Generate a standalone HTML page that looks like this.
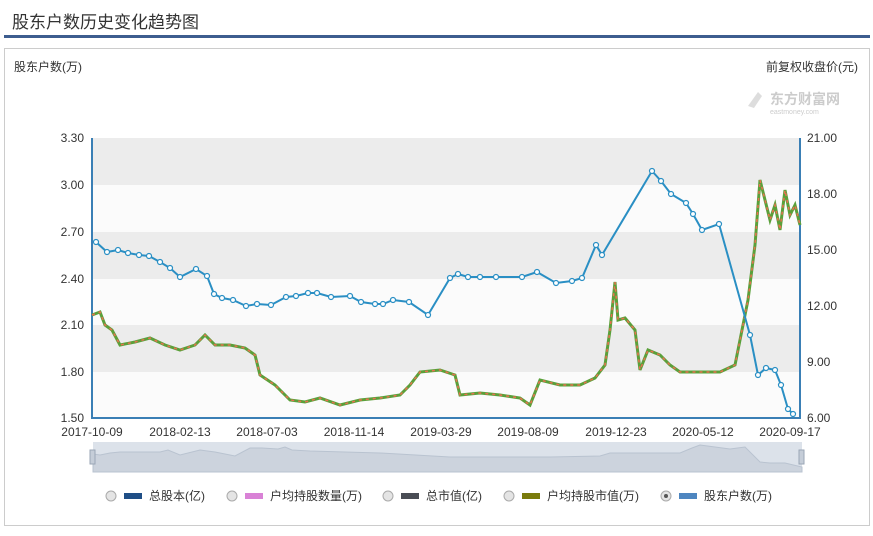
<!DOCTYPE html>
<html><head><meta charset="utf-8"><style>
body{margin:0;width:873px;height:536px;background:#fff;font-family:"Liberation Sans","Noto Sans CJK SC",sans-serif;overflow:hidden;position:relative}
.t{position:absolute;left:12px;top:8px;font-size:17px;color:#333}
.bar{position:absolute;left:4px;top:35px;width:866px;height:3px;background:#3d5d8f}
.box{position:absolute;left:4px;top:48px;width:864px;height:476px;border:1px solid #ccc}
svg{position:absolute;left:0;top:0}
</style></head><body>
<div class="t">股东户数历史变化趋势图</div>
<div class="bar"></div>
<div class="box"></div>
<svg width="873" height="536" font-family="Liberation Sans,Noto Sans CJK SC,sans-serif" font-size="12" fill="#333">
<text x="14" y="71">股东户数(万)</text>
<text x="858" y="71" text-anchor="end">前复权收盘价(元)</text>
<text x="770" y="104" font-size="14" fill="#ccc" font-weight="bold">东方财富网</text>
<text x="770" y="114" font-size="7" fill="#ccc">eastmoney.com</text>
<path d="M748 106 L758 92 L762 96 L754 108 Z" fill="#ddd"/>
<rect x="93" y="138" width="707" height="47" fill="#ececec"/>
<rect x="93" y="232" width="707" height="47" fill="#ececec"/>
<rect x="93" y="325" width="707" height="47" fill="#ececec"/>
<g fill="#fff"><rect x="93" y="185" width="707" height="47" fill="#fbfbfb"/><rect x="93" y="279" width="707" height="46" fill="#fbfbfb"/><rect x="93" y="372" width="707" height="46" fill="#fbfbfb"/></g>
<line x1="92" y1="138" x2="92" y2="419" stroke="#3a7fb5" stroke-width="2"/>
<line x1="800" y1="138" x2="800" y2="419" stroke="#3a7fb5" stroke-width="2"/>
<line x1="92" y1="418" x2="800" y2="418" stroke="#3a7fb5" stroke-width="2"/>
<g text-anchor="end"><text x="84" y="142">3.30</text><text x="84" y="189">3.00</text><text x="84" y="236">2.70</text><text x="84" y="283">2.40</text><text x="84" y="329">2.10</text><text x="84" y="376">1.80</text><text x="84" y="422">1.50</text></g>
<g><text x="807" y="142">21.00</text><text x="807" y="198">18.00</text><text x="807" y="254">15.00</text><text x="807" y="310">12.00</text><text x="807" y="366">9.00</text><text x="807" y="422">6.00</text></g>
<g text-anchor="middle"><text x="92" y="436">2017-10-09</text><text x="180" y="436">2018-02-13</text><text x="267" y="436">2018-07-03</text><text x="354" y="436">2018-11-14</text><text x="441" y="436">2019-03-29</text><text x="528" y="436">2019-08-09</text><text x="616" y="436">2019-12-23</text><text x="703" y="436">2020-05-12</text><text x="790" y="436">2020-09-17</text></g>
<polyline fill="none" stroke="#5aa03a" stroke-width="3" points="92,315 100,312 105,325 112,330 120,345 135,342 150,338 165,345 180,350 195,345 205,335 215,345 230,345 245,348 255,355 260,375 275,385 290,400 305,402 320,398 340,405 360,400 380,398 400,395 410,385 420,372 440,370 455,375 460,395 480,393 500,395 520,398 530,405 540,380 560,385 580,385 595,378 605,365 610,330 615,282 618,320 625,318 635,330 640,370 648,350 660,355 670,365 680,372 700,372 720,372 735,365 740,340 748,300 755,245 760,180 765,200 770,220 775,205 780,230 785,190 790,215 795,205 800,225"/>
<polyline fill="none" stroke="#e9704f" stroke-width="1.5" stroke-dasharray="3 4" points="92,315 100,312 105,325 112,330 120,345 135,342 150,338 165,345 180,350 195,345 205,335 215,345 230,345 245,348 255,355 260,375 275,385 290,400 305,402 320,398 340,405 360,400 380,398 400,395 410,385 420,372 440,370 455,375 460,395 480,393 500,395 520,398 530,405 540,380 560,385 580,385 595,378 605,365 610,330 615,282 618,320 625,318 635,330 640,370 648,350 660,355 670,365 680,372 700,372 720,372 735,365 740,340 748,300 755,245 760,180 765,200 770,220 775,205 780,230 785,190 790,215 795,205 800,225"/>
<polyline id="b" fill="none" stroke="#2a8fc4" stroke-width="2" points="96,242 107,252 118,250 128,253 139,255 149,256 160,262 170,268 180,277 196,269 207,276 214,294 222,298 233,300 246,306 257,304 271,305 286,297 296,296 308,293 317,293 331,297 350,296 361,302 375,304 383,304 393,300 409,302 428,315 450,278 458,274 468,277 480,277 496,277 522,277 537,272 556,283 572,281 582,278 596,245 602,255 652,171 661,181 671,194 686,203 693,214 702,230 719,224 750,335 758,375 766,368 775,370 781,385 788,409 793,414"/>
<g fill="#fff" stroke="#2a8fc4" stroke-width="1.2">
<circle cx="96" cy="242" r="2.5"/><circle cx="107" cy="252" r="2.5"/><circle cx="118" cy="250" r="2.5"/><circle cx="128" cy="253" r="2.5"/><circle cx="139" cy="255" r="2.5"/><circle cx="149" cy="256" r="2.5"/><circle cx="160" cy="262" r="2.5"/><circle cx="170" cy="268" r="2.5"/><circle cx="180" cy="277" r="2.5"/><circle cx="196" cy="269" r="2.5"/><circle cx="207" cy="276" r="2.5"/><circle cx="214" cy="294" r="2.5"/><circle cx="222" cy="298" r="2.5"/><circle cx="233" cy="300" r="2.5"/><circle cx="246" cy="306" r="2.5"/><circle cx="257" cy="304" r="2.5"/><circle cx="271" cy="305" r="2.5"/><circle cx="286" cy="297" r="2.5"/><circle cx="296" cy="296" r="2.5"/><circle cx="308" cy="293" r="2.5"/><circle cx="317" cy="293" r="2.5"/><circle cx="331" cy="297" r="2.5"/><circle cx="350" cy="296" r="2.5"/><circle cx="361" cy="302" r="2.5"/><circle cx="375" cy="304" r="2.5"/><circle cx="383" cy="304" r="2.5"/><circle cx="393" cy="300" r="2.5"/><circle cx="409" cy="302" r="2.5"/><circle cx="428" cy="315" r="2.5"/><circle cx="450" cy="278" r="2.5"/><circle cx="458" cy="274" r="2.5"/><circle cx="468" cy="277" r="2.5"/><circle cx="480" cy="277" r="2.5"/><circle cx="496" cy="277" r="2.5"/><circle cx="522" cy="277" r="2.5"/><circle cx="537" cy="272" r="2.5"/><circle cx="556" cy="283" r="2.5"/><circle cx="572" cy="281" r="2.5"/><circle cx="582" cy="278" r="2.5"/><circle cx="596" cy="245" r="2.5"/><circle cx="602" cy="255" r="2.5"/><circle cx="652" cy="171" r="2.5"/><circle cx="661" cy="181" r="2.5"/><circle cx="671" cy="194" r="2.5"/><circle cx="686" cy="203" r="2.5"/><circle cx="693" cy="214" r="2.5"/><circle cx="702" cy="230" r="2.5"/><circle cx="719" cy="224" r="2.5"/><circle cx="750" cy="335" r="2.5"/><circle cx="758" cy="375" r="2.5"/><circle cx="766" cy="368" r="2.5"/><circle cx="775" cy="370" r="2.5"/><circle cx="781" cy="385" r="2.5"/><circle cx="788" cy="409" r="2.5"/><circle cx="793" cy="414" r="2.5"/></g>
<rect x="93" y="442" width="709" height="30" fill="#dce2ea"/>
<path d="M93,454 L100,455 L110,453 L120,452 L160,452 L168,450 L180,455 L200,450 L215,452 L235,456 L250,448 L262,448 L278,449 L285,447 L292,450 L310,451 L380,453 L450,457 L550,457 L600,456 L610,453 L680,453 L692,448 L700,445 L730,449 L745,447 L760,462 L770,463 L785,463 L802,467 L802,472 L93,472 Z" fill="#ccd3dd" stroke="#b9c3d0"/>
<rect x="90" y="450" width="5" height="14" fill="#c5cdd8" stroke="#9aa6b6"/>
<rect x="799" y="450" width="5" height="14" fill="#c5cdd8" stroke="#9aa6b6"/>
<g font-size="12">
<circle cx="111" cy="496" r="5" fill="#e4e4e4" stroke="#aaa"/><rect x="124" y="493" width="18" height="6" fill="#1f4e86"/><text x="149" y="500">总股本(亿)</text>
<circle cx="232" cy="496" r="5" fill="#e4e4e4" stroke="#aaa"/><rect x="245" y="493" width="18" height="6" fill="#d982d6"/><text x="270" y="500">户均持股数量(万)</text>
<circle cx="388" cy="496" r="5" fill="#e4e4e4" stroke="#aaa"/><rect x="401" y="493" width="18" height="6" fill="#4a4d55"/><text x="426" y="500">总市值(亿)</text>
<circle cx="509" cy="496" r="5" fill="#e4e4e4" stroke="#aaa"/><rect x="522" y="493" width="18" height="6" fill="#7a7b0c"/><text x="547" y="500">户均持股市值(万)</text>
<circle cx="666" cy="496" r="5" fill="#e4e4e4" stroke="#aaa"/><circle cx="666" cy="496" r="2" fill="#555"/><rect x="679" y="493" width="18" height="6" fill="#4e86c0"/><text x="704" y="500">股东户数(万)</text>
</g>
</svg>
</body></html>
